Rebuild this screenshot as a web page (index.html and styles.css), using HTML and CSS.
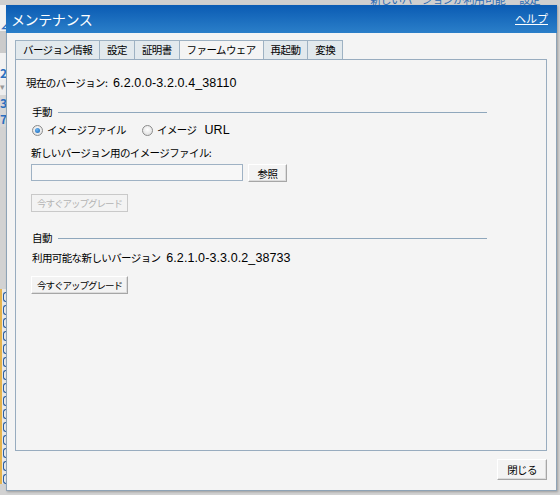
FILE: index.html
```html
<!DOCTYPE html>
<html lang="ja">
<head>
<meta charset="utf-8">
<title>メンテナンス</title>
<link rel="stylesheet" href="styles.css">
</head>
<body>
<div class="page">
  <div class="topbar"><span class="toplink">新しいバージョンが利用可能</span><span class="toplink">設定</span></div>
  <div class="side">
    <div class="srow light"><span class="blue">∠</span></div>
    <div class="srow gray"></div>
    <div class="srow light"><span class="blue">2</span></div>
    <div class="srow tri">▾</div>
    <div class="srow"><span class="blue">3</span></div>
    <div class="srow"><span class="blue">7</span></div>
  </div>
  <div class="sidelist">
    <div class="mark"></div><div class="mark"></div><div class="mark"></div><div class="mark"></div><div class="mark"></div><div class="mark"></div><div class="mark"></div><div class="mark"></div><div class="mark"></div><div class="mark"></div><div class="mark"></div><div class="mark"></div><div class="mark"></div><div class="mark"></div><div class="mark"></div>
  </div>
</div>

<div class="dialog">
  <div class="dlg-head">
    <span class="dlg-title">メンテナンス</span>
    <a class="help" href="#">ヘルプ</a>
  </div>
  <div class="dlg-body">
    <div class="tabs">
      <div class="tab">バージョン情報</div>
      <div class="tab">設定</div>
      <div class="tab">証明書</div>
      <div class="tab active">ファームウェア</div>
      <div class="tab">再起動</div>
      <div class="tab">変換</div>
    </div>
    <div class="panel">
      <div class="current">現在のバージョン: <span class="num ver">6.2.0.0-3.2.0.4_38110</span></div>

      <div class="section">
        <div class="sec-head"><span>手動</span><span class="rule"></span></div>
        <div class="radios">
          <label class="radio-item first"><span class="radio checked"></span>イメージファイル</label>
          <label class="radio-item"><span class="radio"></span>イメージ <span class="num url">URL</span></label>
        </div>
        <div class="file-label">新しいバージョン用のイメージファイル:</div>
        <div class="file-row">
          <div class="input"></div>
          <div class="btn browse">参照</div>
        </div>
        <div class="btn upgrade disabled">今すぐアップグレード</div>
      </div>

      <div class="section auto">
        <div class="sec-head"><span>自動</span><span class="rule"></span></div>
        <div class="avail">利用可能な新しいバージョン <span class="num ver">6.2.1.0-3.3.0.2_38733</span></div>
        <div class="btn upgrade">今すぐアップグレード</div>
      </div>
    </div>
    <div class="footer">
      <div class="btn close">閉じる</div>
    </div>
  </div>
</div>
</body>
</html>
```

FILE: styles.css
```css
html, body {
  margin: 0;
  padding: 0;
}
body {
  width: 560px;
  height: 495px;
  overflow: hidden;
  background: #d2d2d2;
  font-family: "Noto Sans CJK JP", "Liberation Sans", sans-serif;
  font-size: 10.5px;
  letter-spacing: -0.6px;
  color: #000;
  position: relative;
}

/* background page (mostly hidden behind the dialog) */
.page {
  position: relative;
}
.topbar {
  height: 5px;
  overflow: hidden;
  background: #cfcfcf;
  display: flex;
  justify-content: flex-end;
  gap: 14px;
  padding-right: 20px;
}
.toplink {
  color: #2d6cb4;
  font-size: 11px;
  line-height: 11px;
  margin-top: -6px;
}
.side {
  width: 6px;
  overflow: hidden;
}
.srow {
  height: 16px;
  font-size: 12px;
  line-height: 16px;
  background: #d6d6d6;
}
.srow.light { background: #f2f2f2; height: 26px; line-height: 40px; }
.srow.gray { background: #cbcbcb; height: 22px; }
.srow.tri { color: #999; font-size: 9px; background: #eeeeee; }
.srow .blue { color: #2a6fc0; font-weight: bold; }
.sidelist {
  margin-top: 162px;
  width: 6px;
  overflow: hidden;
  background: #e8e8e8;
}
.mark {
  height: 13px;
  box-sizing: border-box;
  border-left: 2px solid #e6b44c;
  position: relative;
}
.mark::after {
  content: "";
  position: absolute;
  right: 0;
  top: 3px;
  width: 2px;
  height: 8px;
  border: 1px solid #2d5fa0;
  border-right: none;
  border-radius: 3px 0 0 3px;
}

/* dialog */
.dialog {
  position: absolute;
  left: 6px;
  top: 5px;
  width: 551px;
  height: 486px;
  box-sizing: border-box;
  background: #f4f4f4;
  border: 1px solid #8ea3b6;
  border-top: none;
  display: flex;
  flex-direction: column;
  box-shadow: 1px 1px 2px rgba(0,0,0,0.25);
}
.dlg-head {
  height: 28px;
  flex: none;
  background: linear-gradient(#0a5bb3, #2b7fc9);
  display: flex;
  align-items: center;
  justify-content: space-between;
  padding: 0 9px 0 5px;
  margin: 0 -1px;
}
.dlg-title {
  color: #fff;
  font-size: 14px;
  letter-spacing: -0.4px;
}
.help {
  color: #fff;
  font-size: 11px;
  letter-spacing: 0;
  text-decoration: underline;
  margin-top: -2px;
}
.dlg-body {
  flex: 1;
  display: flex;
  flex-direction: column;
  padding: 7px 9px 10px 8px;
}

/* tabs */
.tabs {
  display: flex;
  height: 19px;
  flex: none;
}
.tab {
  box-sizing: border-box;
  height: 19px;
  line-height: 17px;
  padding: 0 7px;
  background: #e2e9ed;
  border: 1px solid #9eb2c3;
  border-left: none;
  border-bottom: none;
  white-space: nowrap;
}
.tab:first-child {
  border-left: 1px solid #9eb2c3;
}
.tab.active {
  background: #f4f4f4;
}

/* panel */
.panel {
  flex: none;
  height: 392px;
  box-sizing: border-box;
  border: 1px solid #98acbf;
  padding: 16px 0 0 10px;
}
.current {
  line-height: 14px;
  height: 14px;
  white-space: nowrap;
}
.num {
  font-family: "Liberation Sans", "DejaVu Sans", sans-serif;
  font-size: 12.5px;
  letter-spacing: 0.1px;
}
.num.ver {
  margin-left: 4px;
}
.section {
  margin: 15px 59px 0 5px;
}
.section.auto {
  margin-top: 19px;
}
.sec-head {
  display: flex;
  align-items: center;
  height: 14px;
  line-height: 14px;
  padding-left: 1px;
}
.sec-head .rule {
  flex: 1;
  height: 1px;
  background: #8fa7bc;
  margin-left: 6px;
}
.radios {
  display: flex;
  align-items: center;
  height: 14px;
  margin-top: 4px;
  padding-left: 1px;
}
.radio-item {
  display: flex;
  align-items: center;
  gap: 4px;
  line-height: 14px;
  white-space: nowrap;
}
.radio-item.first {
  width: 110px;
}
.radio-item .url {
  margin-left: 4px;
}
.radio {
  flex: none;
  width: 11px;
  height: 11px;
  box-sizing: border-box;
  border-radius: 50%;
  border: 1px solid #8b8b8b;
  background: radial-gradient(circle at 50% 40%, #ffffff, #d8d8d8);
  position: relative;
}
.radio.checked::after {
  content: "";
  position: absolute;
  left: 2px;
  top: 2px;
  width: 5px;
  height: 5px;
  border-radius: 50%;
  background: radial-gradient(circle at 40% 35%, #6fb6f0, #0c5db4);
}
.file-label {
  margin-top: 9px;
  line-height: 14px;
  height: 14px;
  white-space: nowrap;
}
.file-row {
  display: flex;
  align-items: center;
  margin-top: 3px;
}
.input {
  width: 212px;
  height: 17px;
  box-sizing: border-box;
  border: 1px solid #9fb2c4;
  background: #f7f7f7;
}
.btn {
  box-sizing: border-box;
  display: inline-flex;
  align-items: center;
  justify-content: center;
  background: #f3f3f3;
  border: 1px solid;
  border-color: #ffffff #a6a6a6 #a6a6a6 #ffffff;
  box-shadow: inset -1px -1px 0 #dcdcdc;
  white-space: nowrap;
}
.browse {
  width: 39px;
  height: 18px;
  margin-left: 5px;
  margin-top: 1px;
}
.upgrade {
  width: 97px;
  height: 18px;
  margin-top: 12px;
  display: flex;
  font-size: 9.5px;
  letter-spacing: -1px;
}
.upgrade.disabled {
  border-color: #c9c9c9;
  box-shadow: none;
  color: #b4b4b4;
}
.avail {
  margin-top: 6px;
  line-height: 14px;
  height: 14px;
  padding-left: 1px;
  white-space: nowrap;
}
.auto .upgrade {
  margin-top: 11px;
}
.footer {
  display: flex;
  justify-content: flex-end;
  margin-top: 8px;
}
.close {
  width: 50px;
  height: 21px;
}
```
